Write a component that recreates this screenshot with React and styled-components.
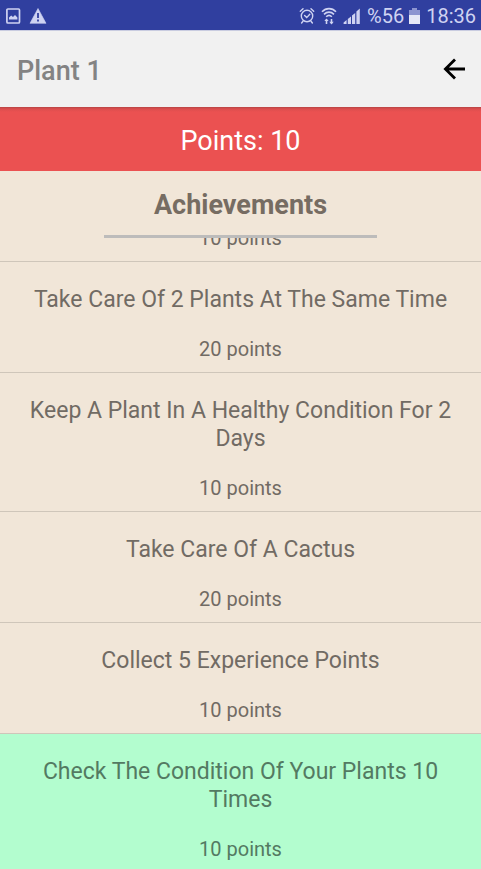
import React, { useLayoutEffect, useRef } from "react";
import styled, { createGlobalStyle } from "styled-components";

const GlobalStyle = createGlobalStyle`
  *, *::before, *::after { box-sizing: border-box; }
  body {
    margin: 0;
    background: #f1e6d8;
    font-family: Roboto, "Liberation Sans", sans-serif;
  }
  h1, h2, h3, p, ul { margin: 0; padding: 0; }
`;

const Screen = styled.div`
  display: flex;
  flex-direction: column;
  height: 100vh;
  overflow: hidden;
`;

const StatusBar = styled.div`
  display: flex;
  justify-content: space-between;
  align-items: center;
  flex: none;
  height: 31px;
  padding: 1px 5px 0;
  background: #303f9f;
  border-bottom: 1px solid #c9cce0;
  color: #cfd3f2;
  font-size: 20px;
  line-height: 28px;
`;

const StatusGroup = styled.div`
  display: flex;
  align-items: center;
  gap: ${(p) => p.$gap}px;
  svg { display: block; flex: none; }
`;

const AppBar = styled.header`
  display: flex;
  justify-content: space-between;
  align-items: center;
  flex: none;
  height: 76px;
  padding: 4px 10px 0 17px;
  background: #f1f1f1;
`;

const AppTitle = styled.h1`
  color: #838383;
  font-size: 27px;
  font-weight: 500;
  line-height: 32px;
`;

const BackButton = styled.button`
  display: grid;
  place-items: center;
  width: 34px;
  height: 40px;
  padding: 0 0 4px;
  border: 0;
  background: none;
  color: #000;
  cursor: pointer;
`;

const PointsBanner = styled.p`
  flex: none;
  padding: 18px 0 14px;
  background: linear-gradient(#b84444, #dc4e4e 2px, #eb5151 5px);
  color: #fff;
  font-size: 27px;
  line-height: 32px;
  text-align: center;
`;

const SectionHeader = styled.div`
  display: flex;
  flex-direction: column;
  align-items: center;
  flex: none;
  padding-top: 18px;
`;

const SectionTitle = styled.h2`
  padding: 0 50px 14px;
  border-bottom: 3px solid #bdbcbb;
  color: #766c62;
  font-size: 27px;
  font-weight: 700;
  line-height: 32px;
`;

const List = styled.ul`
  flex: 1;
  min-height: 0;
  overflow-y: auto;
  scrollbar-width: none;
  list-style: none;
`;

const Row = styled.li`
  display: flex;
  flex-direction: column;
  gap: 23px;
  padding: ${(p) => (p.$titled ? 24 : 0)}px 24px 11px;
  border-bottom: 1px solid #cfc6ba;
  background: ${(p) => (p.$done ? "#b3fdcf" : "#f1e6d8")};
  color: ${(p) => (p.$done ? "#537a62" : "#716b64")};
  text-align: center;
`;

const RowTitle = styled.h3`
  font-size: 23px;
  font-weight: 400;
  line-height: 28px;
`;

const RowPoints = styled.p`
  font-size: 20px;
  line-height: 24px;
`;

const achievements = [
  { points: 10 },
  { title: "Take Care Of 2 Plants At The Same Time", points: 20 },
  { title: "Keep A Plant In A Healthy Condition For 2 Days", points: 10 },
  { title: "Take Care Of A Cactus", points: 20 },
  { title: "Collect 5 Experience Points", points: 10 },
  { title: "Check The Condition Of Your Plants 10 Times", points: 10, done: true },
];

const INITIAL_SCROLL = 12;

const PictureIcon = () => (
  <svg width="16" height="16" viewBox="0 0 16 16" fill="none" aria-hidden="true">
    <rect x="1.9" y="1" width="12.6" height="14" rx="1" stroke="currentColor" strokeWidth="1.7" />
    <path d="M4 11.5V9.5L6.2 7.6 8 9 10 7 12.4 9.5V11.5Z" fill="currentColor" />
  </svg>
);

const WarningIcon = () => (
  <svg width="18" height="16" viewBox="0 0 18 16" aria-hidden="true">
    <path d="M9 0.5 17 15.3H1Z" fill="currentColor" stroke="currentColor" strokeWidth="0.6" strokeLinejoin="round" />
    <path d="M9 5v5M9 11.5v2" stroke="#303f9f" strokeWidth="1.8" />
  </svg>
);

const AlarmIcon = () => (
  <svg width="16" height="18" viewBox="0 0 16 18" fill="none" stroke="currentColor" strokeWidth="1.4" strokeLinecap="round" aria-hidden="true">
    <circle cx="8" cy="9" r="5.7" />
    <path d="M1.3 4.2 4 1.8M14.7 4.2 12 1.8M4 14.2 2.6 16M12 14.2 13.4 16M5.6 8.6 7.7 10.6 10.8 7.2" />
  </svg>
);

const WifiIcon = () => (
  <svg width="16" height="18" viewBox="0 0 16 18" fill="none" stroke="currentColor" strokeWidth="1.6" aria-hidden="true">
    <path d="M1 4.8C5 0.6 11 0.6 15 4.8M3 7.4C6 4.4 10 4.4 13 7.4M5.2 9.8C7 8 9 8 10.8 9.8" />
    <path d="M5.5 17V12.5M10.5 12V16.5" />
    <path d="M3.3 14 5.5 11.4 7.7 14ZM8.3 14.8 10.5 17.4 12.7 14.8Z" fill="currentColor" stroke="none" />
  </svg>
);

const SignalIcon = () => (
  <svg width="18" height="18" viewBox="0 0 18 18" fill="currentColor" aria-hidden="true">
    <path d="M0.6 17v-1.6l3-2.4v4ZM4.8 17v-5l3.2-2.6V17ZM9 17V8.6L12.2 6v11ZM13.4 17V4.6L16.8 1.6V17Z" />
  </svg>
);

const BatteryIcon = () => (
  <svg width="11" height="18" viewBox="0 0 11 18" aria-hidden="true">
    <path d="M3 1h5v2h3v6H0V3h3Z" fill="#8d95d0" />
    <path d="M0 8h11v9H0Z" fill="#e6e8f6" />
  </svg>
);

const BackIcon = () => (
  <svg width="26" height="24" viewBox="0 0 26 24" fill="none" stroke="currentColor" strokeWidth="2.8" aria-hidden="true">
    <path d="M24 12H4M14 2.4 4.4 12 14 21.6" />
  </svg>
);

export default function App() {
  const listRef = useRef(null);

  useLayoutEffect(() => {
    listRef.current.scrollTop = INITIAL_SCROLL;
  }, []);

  return (
    <Screen>
      <GlobalStyle />
      <StatusBar>
        <StatusGroup $gap={8}>
          <PictureIcon />
          <WarningIcon />
        </StatusGroup>
        <StatusGroup $gap={6}>
          <AlarmIcon />
          <WifiIcon />
          <SignalIcon />
          <StatusGroup $gap={5}>
            <span>%56</span>
            <BatteryIcon />
          </StatusGroup>
          <time>18:36</time>
        </StatusGroup>
      </StatusBar>
      <AppBar>
        <AppTitle>Plant 1</AppTitle>
        <BackButton type="button" aria-label="Back">
          <BackIcon />
        </BackButton>
      </AppBar>
      <PointsBanner>Points: 10</PointsBanner>
      <SectionHeader>
        <SectionTitle>Achievements</SectionTitle>
      </SectionHeader>
      <List ref={listRef}>
        {achievements.map((item, index) => (
          <Row key={index} $done={item.done} $titled={Boolean(item.title)}>
            {item.title && <RowTitle>{item.title}</RowTitle>}
            <RowPoints>{item.points} points</RowPoints>
          </Row>
        ))}
      </List>
    </Screen>
  );
}
